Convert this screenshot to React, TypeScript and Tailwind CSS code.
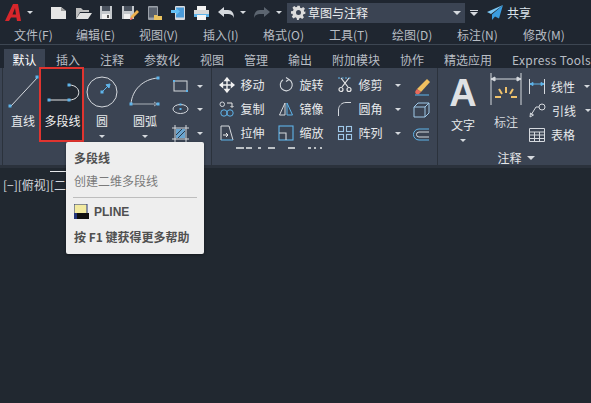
// App.tsx
// CAD ribbon with polyline tooltip

const font = "font-['Noto_Sans_CJK_SC','Noto_Sans',sans-serif]";

const menus = [
  { name: "文件(F)", w: "w-[62px]" },
  { name: "编辑(E)", w: "w-[63px]" },
  { name: "视图(V)", w: "w-[64px]" },
  { name: "插入(I)", w: "w-[60px]" },
  { name: "格式(O)", w: "w-[66px]" },
  { name: "工具(T)", w: "w-[63px]" },
  { name: "绘图(D)", w: "w-[65px]" },
  { name: "标注(N)", w: "w-[66px]" },
  { name: "修改(M)", w: "w-[60px]" },
];

const tabs = [
  { name: "插入", w: "w-[44px]" },
  { name: "注释", w: "w-[44px]" },
  { name: "参数化", w: "w-[56px]" },
  { name: "视图", w: "w-[44px]" },
  { name: "管理", w: "w-[44px]" },
  { name: "输出", w: "w-[44px]" },
  { name: "附加模块", w: "w-[68px]" },
  { name: "协作", w: "w-[44px]" },
  { name: "精选应用", w: "w-[68px]" },
];

const Caret = ({ className = "" }: { className?: string }) => (
  <span className={`w-0 h-0 border-x-[3px] border-x-transparent border-t-[3px] border-t-[#d5d9de] ${className}`} />
);

const Grip = ({ x, y, s = 3 }: { x: number; y: number; s?: number }) => (
  <rect x={x - s / 2} y={y - s / 2} width={s} height={s} fill="#5fb4ea" />
);

/* ================= TOP BAR ICONS ================= */
const NewIcon = () => (
  <svg width="17" height="14" viewBox="0 0 17 14"><path d="M1 1h10l5 4v8H1z" fill="#e6e6e6" /><path d="M11 1v4h5z" fill="#9a9a9a" /></svg>
);
const OpenIcon = () => (
  <svg width="17" height="14" viewBox="0 0 17 14"><path d="M1 13V2h5l2 2h6v2H5z" fill="#bdbdbd" /><path d="M1 13l4-6h12l-4 6z" fill="#e2e2e2" /></svg>
);
const SaveIcon = () => (
  <svg width="14" height="15" viewBox="0 0 14 15"><path d="M1 1h12v13H1z" fill="#c4c8cc" /><path d="M3 1h8v5H3z" fill="#4a525e" /><path d="M3 9h8v5H3z" fill="#f0f0f0" /><path d="M8 10h2v3H8z" fill="#555" /></svg>
);
const SaveAsIcon = () => (
  <svg width="18" height="16" viewBox="0 0 18 16"><path d="M1 1h12v13H1z" fill="#c4c8cc" /><path d="M3 1h8v5H3z" fill="#4a525e" /><path d="M3 9h6v5H3z" fill="#f0f0f0" /><path d="M9 15l1-4 6-6 2 2-6 6z" fill="#eeb04d" /><path d="M9 15l1-3 2 2z" fill="#e66" /></svg>
);
const PhoneOpenIcon = () => (
  <svg width="16" height="16" viewBox="0 0 16 16"><rect x="1" y="1" width="10" height="14" rx="1" fill="#9aa0a8" /><rect x="2" y="2.500" width="8" height="10" fill="#5a626e" /><path d="M7 15v-5h3l1 1h4v4z" fill="#e9c25f" /></svg>
);
const PhoneSendIcon = () => (
  <svg width="15" height="16" viewBox="0 0 15 16"><rect x="4" y="1" width="10" height="14" rx="1" fill="#d8dbdf" /><rect x="5" y="2.500" width="8" height="10" fill="#4a9ad8" /><path d="M0 5h5V3l4 3.500-4 3.500V8H0z" fill="#63c0f5" /></svg>
);
const PrintIcon = () => (
  <svg width="17" height="16" viewBox="0 0 17 16"><path d="M4 1h9v4H4z" fill="#f2f2f2" /><path d="M1 5h15v7H1z" fill="#d9d9d9" /><path d="M1 9h15v3H1z" fill="#5fb4ea" /><path d="M4 10h9v5H4z" fill="#f5f5f5" /></svg>
);
const UndoIcon = ({ color, flip }: { color: string; flip?: boolean }) => (
  <svg width="16" height="12" viewBox="0 0 16 12" className={flip ? "-scale-x-100" : ""}>
    <path d="M0 5l6-5v3h4c4 0 6 3 6 8-1-3-3-4-6-4H6v3z" fill={color} />
  </svg>
);
const GearIcon = () => (
  <svg width="15" height="15" viewBox="0 0 24 24"><path fill="#dcdcdc" fillRule="evenodd" d="M10 1h4l.6 3.200 2.200.9 2.700-1.800 2.800 2.800-1.800 2.700.9 2.200L23 10v4l-3.200.6-.9 2.200 1.800 2.700-2.800 2.800-2.700-1.800-2.200.9L12.400 24h-2.800l-.6-3.400-2.200-.9-2.700 1.800-2.800-2.800 1.800-2.700-.9-2.200L0 14v-4l3.200-.6.900-2.200L2.300 4.500 5.100 1.700l2.700 1.800 2.200-.9zM12 8a4 4 0 100 8 4 4 0 000-8z" /></svg>
);
const LogoIcon = () => (
  <svg width="16" height="17" viewBox="0 0 16 17"><path d="M0 17L8 0h5l3 17h-4l-.6-3.500H6L4 17z" fill="#d7262b" /><path d="M7.500 10.500h3.500L10 4z" fill="#2a1d22" /></svg>
);
const PlaneIcon = () => (
  <svg width="16" height="15" viewBox="0 0 16 15"><path d="M16 0L0 7l4 2z" fill="#7cc8f5" /><path d="M16 0L5 9.500V15l3-3.500 4 2z" fill="#3a9de0" /></svg>
);

/* ================= RIBBON ICONS ================= */
const ToolGlyphs = {
  move: (
    <path d="M8 1v14M1 8h14M8 1L6 3.500h4zM8 15l-2-2.500h4zM1 8l2.500-2v4zM15 8l-2.500-2v4z" stroke="#f0f0f0" strokeWidth="1.400" fill="#f0f0f0" />
  ),
  rotate: <path d="M11 2.500A6 6 0 115 2.800M8 .5l3 2-3 2" stroke="#d5d9de" strokeWidth="1.100" fill="none" />,
  trim: (
    <g stroke="#e8e8e8" strokeWidth="1.200" fill="none">
      <path d="M1 1h14" strokeDasharray="2 1.500" stroke="#5fb4ea" />
      <path d="M4 1l7 9M12 1l-7 9" />
      <circle cx="4" cy="12.500" r="2" />
      <circle cx="12" cy="12.500" r="2" />
    </g>
  ),
  copy: (
    <g stroke="#d5d9de" strokeWidth="1" fill="none">
      <rect x="1" y="1" width="4.500" height="4.500" rx="2.200" />
      <path d="M8 2h5v4M11.500 5l1.500 1.500L14.500 5" stroke="#e8e8e8" />
      <circle cx="5" cy="12" r="3.200" stroke="#5fb4ea" />
      <circle cx="11" cy="12" r="3.200" stroke="#5fb4ea" />
    </g>
  ),
  mirror: (
    <g strokeWidth="1" fill="none">
      <path d="M7 2L1.500 14H7z" stroke="#d5d9de" />
      <path d="M9 2l5.500 12H9z" stroke="#5fb4ea" />
    </g>
  ),
  fillet: <path d="M1.500 15V9C1.500 4.500 5 1.500 9 1.500h5" stroke="#d5d9de" strokeWidth="1" fill="none" strokeDasharray="11 1 30" />,
  stretch: (
    <g strokeWidth="1" fill="none">
      <path d="M2 15V1h8l4 14" stroke="#d5d9de" />
      <path d="M4 10h5M7 8l2 2-2 2" stroke="#f0f0f0" />
      <path d="M2 15h12" stroke="#5fb4ea" />
    </g>
  ),
  scale: (
    <g strokeWidth="1.100" fill="none">
      <rect x="1" y="1" width="14" height="14" stroke="#5fb4ea" />
      <path d="M1 8h7v7" stroke="#d5d9de" />
    </g>
  ),
  array: (
    <g stroke="#9fc8e8" strokeWidth="1.100" fill="none">
      <rect x="1.500" y="1.500" width="5" height="5" />
      <rect x="9.500" y="1.500" width="5" height="5" />
      <rect x="1.500" y="9.500" width="5" height="5" />
      <rect x="9.500" y="9.500" width="5" height="5" />
    </g>
  ),
};

const LineIcon = () => (
  <svg width="32" height="37" viewBox="0 0 32 37">
    <path d="M4 35L31 6" stroke="#d5d9de" strokeWidth="1" />
    <Grip x={30} y={6} />
    <Grip x={3} y={35} />
  </svg>
);
const PolylineIcon = () => (
  <svg width="36" height="24" viewBox="0 0 36 24">
    <path d="M5 21h20M25 21c13 0 13-15 0-15" stroke="#e4e6e8" strokeWidth="1" fill="none" />
    <Grip x={5} y={21} />
    <Grip x={25} y={21} />
    <Grip x={25} y={6} />
  </svg>
);
const CircleIcon = () => (
  <svg width="32" height="32" viewBox="0 0 32 32">
    <circle cx="16" cy="16" r="15" stroke="#d5d9de" strokeWidth="1" fill="none" />
    <path d="M16 16l7-7M24 8l-4 .8L23 12z" stroke="#5fb4ea" strokeWidth="1" fill="#5fb4ea" />
    <Grip x={16} y={16} />
  </svg>
);
const ArcIcon = () => (
  <svg width="32" height="32" viewBox="0 0 32 32">
    <path d="M2 28C3 14 14 3 29 2" stroke="#d5d9de" strokeWidth="1" fill="none" />
    <path d="M2 28h24M25 26l3 2-3 2" stroke="#aab0b8" strokeWidth="1" fill="none" />
    <Grip x={2} y={28} />
    <Grip x={29} y={2} />
    <Grip x={29} y={28} />
  </svg>
);
const RectIcon = () => (
  <svg width="17" height="14" viewBox="0 0 17 14">
    <rect x="2" y="2" width="13" height="10" stroke="#d5d9de" fill="none" />
    <Grip x={2} y={2} s={2} />
    <Grip x={15} y={12} s={2} />
  </svg>
);
const EllipseIcon = () => (
  <svg width="17" height="14" viewBox="0 0 17 14">
    <ellipse cx="8.500" cy="7" rx="7.500" ry="4.500" stroke="#d5d9de" fill="none" />
    <Grip x={8.500} y={7} s={2} />
    <Grip x={8.500} y={2.500} s={2} />
  </svg>
);
const HatchIcon = () => (
  <svg width="17" height="17" viewBox="0 0 17 17">
    <path d="M0 3h17M0 14h17M3 0v17M14 0v17" stroke="#d5d9de" strokeWidth="1" />
    <rect x="4" y="4" width="9" height="9" fill="#6aa5d0" />
    <path d="M4 10l6-6M6 13l7-7" stroke="#2c3a4a" strokeWidth="1" />
  </svg>
);
const EraserIcon = () => (
  <svg width="18" height="17" viewBox="0 0 18 17">
    <path d="M14 0l3 3-9 10-4-3z" fill="#f0c060" />
    <path d="M4 10l4 3-2 2c-1 .5-3 .2-3.500-.8-.5-1-.3-2 .5-3z" fill="#e86a5a" />
    <path d="M2 16h14" stroke="#5fb4ea" />
  </svg>
);
const BoxIcon = () => (
  <svg width="17" height="16" viewBox="0 0 17 16" fill="none">
    <path d="M1 5h11v10H1zM1 5l4-4h11v10l-4 4M12 5l4-4" stroke="#9fc8e8" />
  </svg>
);
const OffsetIcon = () => (
  <svg width="17" height="13" viewBox="0 0 17 13" fill="none">
    <path d="M16 1H6a5.500 5.500 0 000 11h10" stroke="#5fb4ea" strokeWidth="1" />
    <path d="M16 4H6a2.500 2.500 0 000 5h10" stroke="#d5d9de" strokeWidth="1" />
  </svg>
);
const DimIcon = () => (
  <svg width="32" height="32" viewBox="0 0 32 32">
    <path d="M1 0v32M31 0v32M1 6h30M1 6l4-2v4zM31 6l-4-2v4z" stroke="#d5d9de" strokeWidth="1" fill="#d5d9de" />
    <path d="M16 14v6M9 16l3 5M23 16l-3 5M5 24h6M21 24h6" stroke="#efc26c" strokeWidth="2" />
  </svg>
);
const LinearIcon = () => (
  <svg width="16" height="15" viewBox="0 0 16 15">
    <path d="M.5 0v15M15.500 0v15" stroke="#d5d9de" />
    <path d="M1 5h14M1 5l3-1.500v3zM15 5l-3-1.500v3z" stroke="#5fb4ea" fill="#5fb4ea" />
  </svg>
);
const LeaderIcon = () => (
  <svg width="17" height="15" viewBox="0 0 17 15" fill="none">
    <circle cx="13" cy="4" r="3" stroke="#d5d9de" />
    <path d="M10 4H7L2 12M1 14l.5-4 3 2z" stroke="#d5d9de" fill="none" />
  </svg>
);
const TableIcon = () => (
  <svg width="16" height="14" viewBox="0 0 16 14" fill="none">
    <path d="M.5.5h15v13H.5zM.5 4h15M.5 7h15M.5 10.500h15M5.500 4v9.500M10.500 4v9.500" stroke="#d5d9de" />
  </svg>
);

const Big = ({ label, icon, caret, width }: { label: string; icon: React.ReactNode; caret?: boolean; width: string }) => (
  <div className={`${width} flex flex-col items-center`}>
    <div className="h-[37px] flex items-end justify-center">{icon}</div>
    <span className="mt-[4px] text-[12px] leading-[18px] text-[#e8eaec]">{label}</span>
    {caret && <Caret className="mt-[5px]" />}
  </div>
);

const Small = ({ glyph, label, caret }: { glyph: React.ReactNode; label: string; caret?: boolean }) => (
  <div className="h-[24px] flex items-center text-[12px] text-[#e8eaec] whitespace-nowrap">
    <svg width="16" height="16" viewBox="0 0 16 16" className="shrink-0">{glyph}</svg>
    <span className="ml-[6px]">{label}</span>
    {caret && <Caret className="ml-[12px]" />}
  </div>
);

const App = () => {
  return (
    <div className={`${font} relative w-[591px] h-[403px] overflow-hidden bg-[#212830] flex flex-col`}>
      {/* Title row */}
      <div className="h-[25px] flex items-center bg-[#1f2630] pl-[5px]">
        <LogoIcon />
        <Caret className="ml-[6px]" />
        <div className="ml-[17px] w-[184px] flex items-center justify-between">
          <NewIcon />
          <OpenIcon />
          <SaveIcon />
          <SaveAsIcon />
          <PhoneOpenIcon />
          <PhoneSendIcon />
          <PrintIcon />
          <UndoIcon color="#d5d9de" />
        </div>
        <Caret className="ml-[6px]" />
        <div className="ml-[8px]"><UndoIcon color="#5c6570" flip /></div>
        <Caret className="ml-[6px]" />
        <div className="ml-[5px] w-[178px] h-[20px] bg-[#3b4453] flex items-center pl-[4px] pr-[2px]">
          <GearIcon />
          <span className="ml-[2px] text-[12px] text-[#eceef0]">草图与注释</span>
          <Caret className="ml-auto mr-[2px] border-x-[4px] border-t-[4px]" />
        </div>
        <div className="ml-[5px] flex flex-col items-center gap-[1px]">
          <span className="w-[8px] h-[1px] bg-[#d5d9de]" />
          <Caret className="border-x-[4px] border-t-[4px]" />
        </div>
        <div className="ml-[9px]"><PlaneIcon /></div>
        <span className="ml-[4px] text-[12px] text-[#dce4ec]">共享</span>
      </div>

      {/* Menu row */}
      <div className="h-[20px] flex items-center pl-[14px] text-[12px] text-[#b8bdc4] border-b border-[#3d4652] bg-[#1f2630]">
        {menus.map((m) => (
          <span key={m.name} className={`${m.w} shrink-0`}>{m.name}</span>
        ))}
      </div>

      {/* Tabs */}
      <div className="h-[23px] flex items-end pl-[4px] text-[12px] text-[#b8bdc4] bg-[#1f2630] whitespace-nowrap">
        <span className="w-[42px] h-[19px] pt-[2px] bg-[#3b4453] text-white flex items-center justify-center mr-[11px]">默认</span>
        {tabs.map((t) => (
          <span key={t.name} className={`${t.w} h-[19px] pt-[2px] flex items-center shrink-0`}>{t.name}</span>
        ))}
        <span className="h-[19px] pt-[2px] flex items-center tracking-[0.3px]">Express Tools</span>
      </div>

      {/* Ribbon */}
      <div className="h-[100px] pl-[2px] bg-[#3b4453] flex text-[#e8eaec] border-b-[3px] border-[#2b323c]">
        {/* Draw panel */}
        <div className="w-[209px] flex pt-[3px] border-l border-[#2b323c]">
          <Big label="直线" icon={<LineIcon />} width="w-[40px] -mr-[4px]" />
          <div className="w-[45px] h-[75px] -mt-[4px] border-2 border-[#e0342f] bg-[#222831] flex flex-col items-center">
            <div className="h-[34px] flex items-end"><PolylineIcon /></div>
            <span className="mt-[9px] ml-[2px] text-[12px] leading-[18px] text-[#f0f0f0]">多段线</span>
          </div>
          <Big label="圆" icon={<CircleIcon />} caret width="w-[36px]" />
          <Big label="圆弧" icon={<ArcIcon />} caret width="w-[50px]" />
          <div className="ml-[2px] flex flex-col gap-[9px] pt-[8px]">
            {[<RectIcon key="r" />, <EllipseIcon key="e" />, <HatchIcon key="h" />].map((icon, i) => (
              <div key={i} className="flex items-center gap-[8px]">
                {icon}
                <Caret />
              </div>
            ))}
          </div>
        </div>

        {/* Modify panel */}
        <div className="w-[227px] relative flex border-l border-[#2b323c] pl-[7px] pt-[5px]">
          <div className="grid grid-cols-[59px_59px_76px] h-[72px]">
            <Small glyph={ToolGlyphs.move} label="移动" />
            <Small glyph={ToolGlyphs.rotate} label="旋转" />
            <Small glyph={ToolGlyphs.trim} label="修剪" caret />
            <Small glyph={ToolGlyphs.copy} label="复制" />
            <Small glyph={ToolGlyphs.mirror} label="镜像" />
            <Small glyph={ToolGlyphs.fillet} label="圆角" caret />
            <Small glyph={ToolGlyphs.stretch} label="拉伸" />
            <Small glyph={ToolGlyphs.scale} label="缩放" />
            <Small glyph={ToolGlyphs.array} label="阵列" caret />
          </div>
          <div className="flex flex-col items-center pt-[6px] h-fit">
            <EraserIcon />
            <div className="mt-[6px]"><BoxIcon /></div>
            <div className="mt-[10px] flex"><OffsetIcon /></div>
          </div>
          <svg width="110" height="3" viewBox="0 0 110 3" className="absolute left-[24px] top-[79px]">
            <path d="M0 1h8M10 1h6M22 1h3M32 1h7M52 1h7M72 1h3M78 1h2M84 1h2" stroke="#e8eaec" strokeWidth="1.500" />
          </svg>
        </div>

        {/* Annotation panel */}
        <div className="flex-1 flex flex-col border-l border-[#2b323c]">
          <div className="flex pl-[5px] pt-[5px] h-[84px]">
            <div className="w-[40px] flex flex-col items-center">
              <span className="h-[37px] font-['Liberation_Sans',sans-serif] font-bold text-[38px] leading-[40px] text-[#dfe1e4]">A</span>
              <span className="mt-[6px] text-[12px] leading-[18px]">文字</span>
              <Caret className="mt-[5px]" />
            </div>
            <div className="w-[40px] flex flex-col items-center ml-[3px]">
              <DimIcon />
              <span className="mt-[8px] text-[12px] leading-[18px] text-[#d5d9de]">标注</span>
            </div>
            <div className="ml-[3px] pt-[4px] flex flex-col gap-[5px] text-[12px] whitespace-nowrap">
              <div className="h-[19px] flex items-center gap-[6px]"><LinearIcon />线性<Caret className="ml-[3px]" /></div>
              <div className="h-[19px] flex items-center gap-[6px]"><LeaderIcon />引线<Caret className="ml-[3px]" /></div>
              <div className="h-[19px] flex items-center gap-[6px]"><TableIcon />表格</div>
            </div>
          </div>
          <div className="flex items-center justify-center gap-[5px] pl-[3px] text-[12px] leading-[14px] text-[#e4e6e8]">
            注释
            <Caret className="border-x-[4px] border-t-[4px]" />
          </div>
        </div>
      </div>

      {/* Canvas */}
      <div className="flex-1 pl-[3px] pt-[8px] text-[12px] leading-[18px] text-[#d5d9de]">[−][俯视][二</div>

      {/* Stray crosshair stub above the viewport label */}
      <div className="absolute left-[50px] top-[171px] w-[16px] h-px bg-[#e8eaec]" />

      {/* Tooltip */}
      <div className="absolute left-[66px] top-[142px] w-[138px] h-[112px] bg-[#eeeeee] rounded-[2px] px-[8px] pt-[7px] text-[12px] text-[#505050] shadow-[0_1px_3px_rgba(0,0,0,0.4)]">
        <div className="font-bold leading-[18px]">多段线</div>
        <div className="mt-[5px] leading-[18px] text-[#7a7a7a]">创建二维多段线</div>
        <div className="mt-[7px] -mx-[1px] h-px bg-[#bdbdbd]" />
        <div className="mt-[6px] flex items-center gap-[5px] h-[16px]">
          <svg width="15" height="16" viewBox="0 0 15 16">
            <rect x="0" y="0" width="13" height="14" fill="#f2eaa0" stroke="#23357a" />
            <rect x="3" y="9" width="12" height="6" fill="#111" />
            <rect x="0" y="9" width="3" height="6" fill="#23357a" />
          </svg>
          <span className="font-bold font-['Liberation_Sans',sans-serif] text-[12px]">PLINE</span>
        </div>
        <div className="mt-[8px] leading-[18px] font-bold whitespace-nowrap">按 F1 键获得更多帮助</div>
      </div>
    </div>
  );
};

export default App;
